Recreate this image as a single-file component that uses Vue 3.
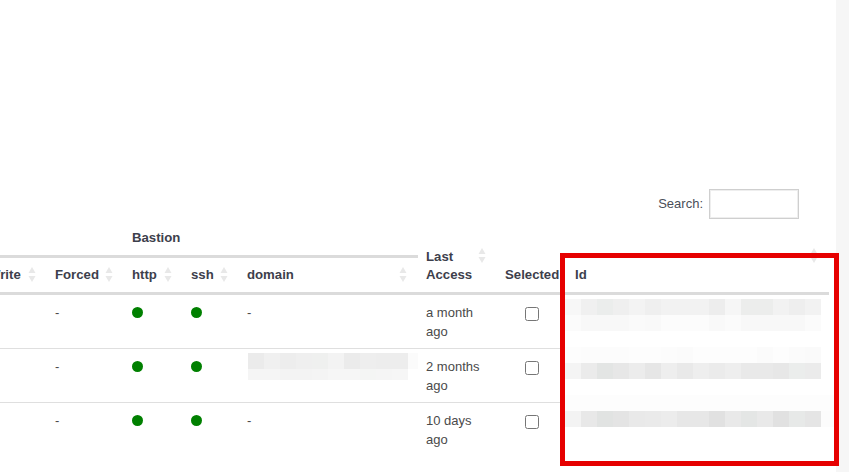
<script setup>
const rows = [
  { access: 'a month ago', domainBlur: false },
  { access: '2 months ago', domainBlur: true },
  { access: '10 days ago', domainBlur: false }
]

const domainBlur = [
  ['ebebeb','f0f0f0','ededed','efefef','eff0ef','f3f3f3','ebebeb','eeeeee','ededed','ededed','fbfbfb'],
  ['f5f5f5','f5f5f5','f3f3f3','f3f3f3','f4f4f4','f6f6f6','f6f6f6','f4f5f4','f5f5f5','f6f6f6','ffffff']
]

const idBlur = [
  ['f7f7f7','f0f0f0','ebedec','efefef','f3f3f3','efefef','f2f2f2','f2f2f2','f2f2f2','ededed','f6f6f6','ecedec','ecedec','f2f2f2','eeeeee','f2f2f2','ffffff'],
  ['fbfbfb','f8f8f8','f8f8f8','f8f8f8','fafafa','f9f9f9','fcfcfc','fcfcfc','fcfcfc','f9f9f9','fbfbfb','f8f8f8','f8f8f8','f8f8f8','f8f8f8','fbfbfb','ffffff'],
  Array(17).fill('ffffff'),
  ['fdfdfd','fcfcfc','fcfcfc','fcfcfc','fdfdfd','fdfdfd','fcfcfc','fbfbfb','fdfdfd','fdfdfd','fdfdfd','fdfdfd','fbfbfb','fdfdfd','fbfbfb','fafafa','ffffff'],
  ['f4f4f4','ebebeb','e3e5e4','e7e7e7','ececec','e6e6e6','eeeeee','e9e9e9','eeeeee','ebebeb','eeeeee','e9e9e9','e9e9e9','e7e7e7','ebedec','ebebeb','ffffff'],
  Array(17).fill('ffffff'),
  Array(17).fill('fdfdfd'),
  ['f3f3f3','e8e8e8','e1e3e2','e4e4e4','e9e9e9','eaeaea','ececec','e7e7e7','e7e7e7','e1e1e1','e9e9e9','e4e6e5','e9e9e9','e1e1e1','e7e9e8','e5e5e5','fcfcfc']
]
</script>

<template>
  <div class="page">
    <main class="content">
      <div class="search">
        <label class="search-label" for="q">Search:</label>
        <input id="q" class="search-input" type="text" />
      </div>

      <table class="grid">
        <colgroup>
          <col class="c-write" /><col class="c-forced" /><col class="c-http" /><col class="c-ssh" />
          <col class="c-domain" /><col class="c-access" /><col class="c-selected" /><col class="c-id" />
        </colgroup>
        <thead>
          <tr>
            <th class="group" colspan="2"></th>
            <th class="group" colspan="3">Bastion</th>
            <th class="tall" rowspan="2">
              <div class="th-inner">
                <span>Last Access</span>
                <svg class="sort sort-top" viewBox="0 0 8 15"><path d="M4 0 7.5 6H.5zM.5 9h7L4 15z" /></svg>
              </div>
            </th>
            <th class="tall nowrap" rowspan="2"><span>Selected</span></th>
            <th class="tall" rowspan="2">
              <div class="th-inner id-inner">
                <span class="id-label">Id</span>
                <svg class="sort sort-top" viewBox="0 0 8 15"><path d="M4 0 7.5 6H.5zM.5 9h7L4 15z" /></svg>
              </div>
            </th>
          </tr>
          <tr>
            <th v-for="h in ['Write', 'Forced', 'http', 'ssh', 'domain']" :key="h" class="sub">
              <div class="th-inner">
                <span>{{ h }}</span>
                <svg class="sort" viewBox="0 0 8 15"><path d="M4 0 7.5 6H.5zM.5 9h7L4 15z" /></svg>
              </div>
            </th>
          </tr>
        </thead>
        <tbody>
          <tr v-for="r in rows" :key="r.access">
            <td></td>
            <td>-</td>
            <td><span class="dot"></span></td>
            <td><span class="dot"></span></td>
            <td :class="{ 'blur-cell': r.domainBlur }">
              <template v-if="r.domainBlur">
                <div v-for="(line, i) in domainBlur" :key="i" class="domain-line" :class="'dl' + i">
                  <i v-for="(c, j) in line" :key="j" :style="{ background: '#' + c }"></i>
                </div>
              </template>
              <template v-else>-</template>
            </td>
            <td>{{ r.access }}</td>
            <td class="check"><input type="checkbox" /></td>
            <td></td>
          </tr>
        </tbody>
      </table>

      <div class="id-blur">
        <i
          v-for="(c, k) in idBlur.flat()"
          :key="k"
          :style="{ background: '#' + c }"
        ></i>
      </div>
    </main>
    <aside class="scrollbar"></aside>
    <div class="highlight"></div>
  </div>
</template>

<style>
html, body { margin: 0; background: #fff; }
</style>

<style scoped>
.page {
  position: relative;
  display: flex;
  width: 849px;
  height: 472px;
  overflow: hidden;
  font-family: "Liberation Sans", Arial, sans-serif;
  font-size: 13px;
  color: #4a4a4a;
  background: #fff;
}
.content {
  position: relative;
  flex: 0 0 836px;
  overflow: hidden;
  padding-top: 189px;
  box-sizing: border-box;
}
.scrollbar { flex: 0 0 13px; background: #f6f6f6; }

.search {
  display: flex;
  justify-content: flex-end;
  align-items: center;
  gap: 6px;
  padding-right: 37px;
  margin-bottom: 1px;
}
.search-label { padding-bottom: 2px; color: #4a4e58; }
.search-input {
  width: 90px;
  height: 30px;
  box-sizing: border-box;
  border: 1px solid #cfcfcf;
  box-shadow: inset 0 0 0 1px #eeeeee;
  padding: 0;
  background: #fff;
}

.grid {
  table-layout: fixed;
  border-collapse: separate;
  border-spacing: 0;
  width: 849px;
  margin-left: -20px;
  line-height: 18px;
}
.c-write { width: 67px; }
.c-forced { width: 77px; }
.c-http { width: 59px; }
.c-ssh { width: 56px; }
.c-domain { width: 179px; }
.c-access { width: 79px; }
.c-selected { width: 70px; }
.c-id { width: 262px; }

th {
  color: #3d404c;
  font-size: 13.2px;
  font-weight: 700;
  text-align: left;
  padding: 8px;
}
.group { padding: 9px 8px 8px; border-bottom: 3px solid #dbdbdb; }
.tall, .sub { vertical-align: bottom; border-bottom: 3px solid #dbdbdb; }
.nowrap { white-space: nowrap; }
.sub, .tall { padding-right: 11px; }

.th-inner {
  display: flex;
  justify-content: space-between;
  align-items: flex-start;
}
.id-inner { height: 36px; }
.id-label { align-self: flex-end; }
.sort {
  flex: 0 0 8px;
  width: 8px;
  height: 15px;
  margin-top: 1px;
  fill: #e8e8e8;
}
.sort-top { margin-top: 0; }

td {
  padding: 8px 8px 7px;
  line-height: 19px;
  vertical-align: top;
  border-bottom: 1px solid #dfdfdf;
}
tbody tr:last-child td { border-bottom: 0; }

.dot {
  display: block;
  width: 11px;
  height: 11px;
  margin-top: 4px;
  border-radius: 50%;
  background: #008000;
}
.check { text-align: center; }
.check input { width: 14px; height: 14px; margin: 4px 0 0; }

.blur-cell { padding: 4px 0 0 9px; }
.domain-line { display: flex; }
.domain-line i { flex: 0 0 16px; }
.domain-line i:last-child { flex-basis: 10px; }
.dl0 { height: 16px; }
.dl1 { height: 11px; }

.id-blur {
  position: absolute;
  left: 565px;
  top: 299px;
  display: grid;
  grid-template-columns: repeat(17, 16px);
  grid-auto-rows: 16px;
  width: 272px;
}
.id-blur i { display: block; }

.highlight {
  position: absolute;
  left: 560px;
  top: 253px;
  width: 279px;
  height: 213px;
  box-sizing: border-box;
  border: 5px solid #e60000;
}
</style>
